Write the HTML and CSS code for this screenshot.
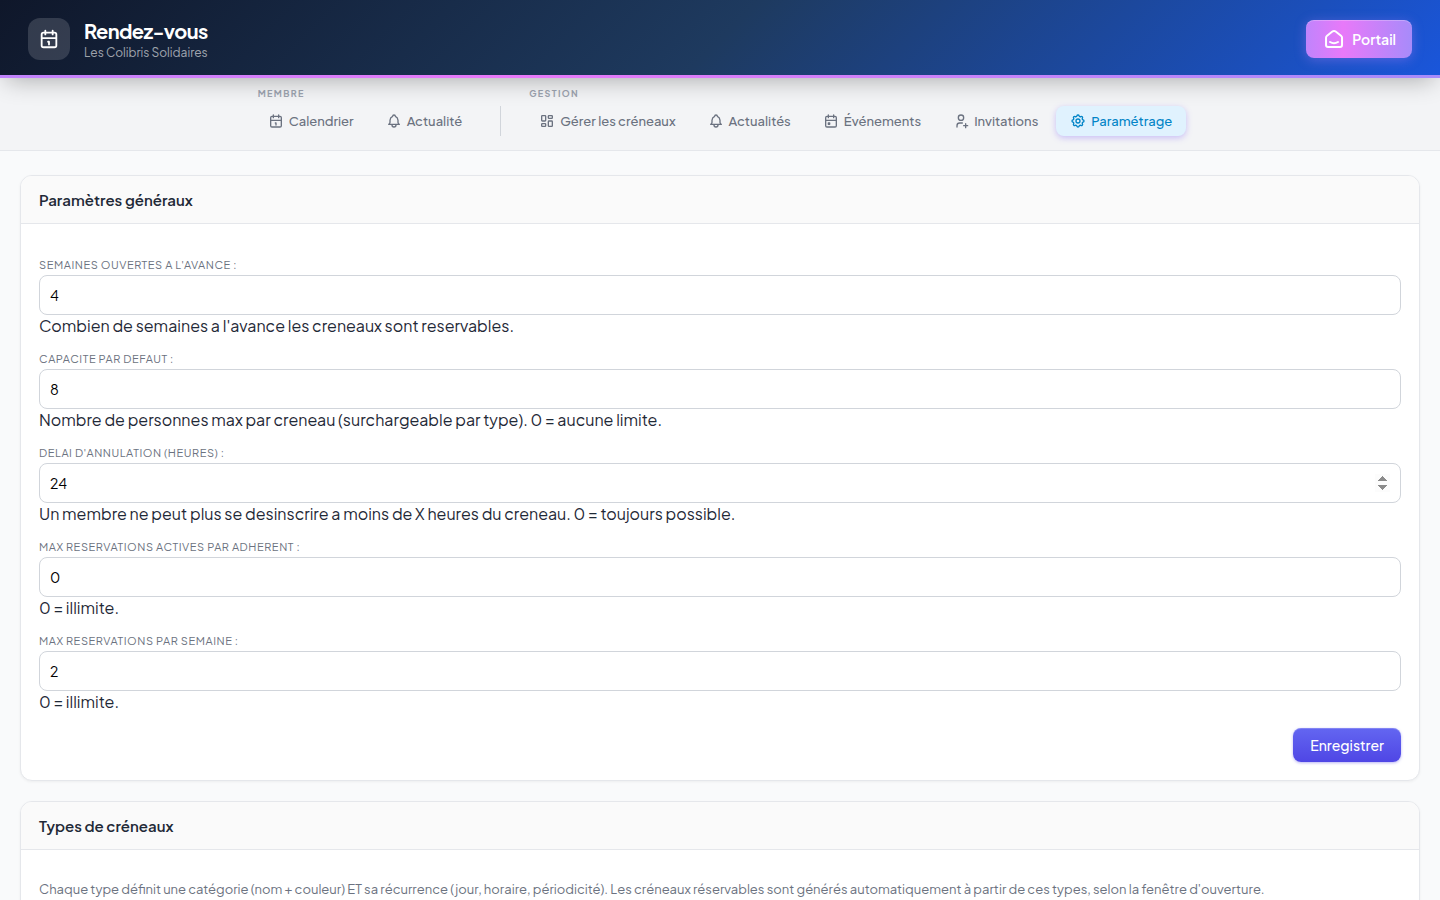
FILE: index.html
```html
<!DOCTYPE html>
<html lang="fr">
<head>
    <meta charset="UTF-8">
    <meta name="viewport" content="width=device-width, initial-scale=1.0">
    <title>Paramétrage - Rendez-vous</title>
    <link rel="stylesheet" href="styles.css">
</head>
<body>

<header class="topbar">
    <div class="brand">
        <span class="brand-icon">
            <svg class="icon icon-md" viewBox="0 0 24 24"><path d="M4 7a2 2 0 0 1 2-2h12a2 2 0 0 1 2 2v12a2 2 0 0 1-2 2H6a2 2 0 0 1-2-2zM16 3v4M8 3v4M4 11h16M11 15h1v3"/></svg>
        </span>
        <div>
            <h1 class="brand-title">Rendez-vous</h1>
            <p class="brand-subtitle">Les Colibris Solidaires</p>
        </div>
    </div>
    <a class="portal-link" href="#">
        <svg class="icon icon-lg" viewBox="0 0 24 24"><path d="M19 8.710l-5.333-4.148a2.666 2.666 0 0 0-3.274 0L5.059 8.710a2.665 2.665 0 0 0-1.029 2.105v7.200a2 2 0 0 0 2 2h12a2 2 0 0 0 2-2v-7.200c0-.823-.38-1.600-1.030-2.105M16 15c-2.210 1.333-5.792 1.333-8 0"/></svg>
        Portail
    </a>
</header>

<nav class="nav">
    <div class="nav-group">
        <span class="nav-label">Membre</span>
        <div class="nav-items">
            <a class="nav-link" href="#">
                <svg class="icon" viewBox="0 0 24 24"><path d="M4 7a2 2 0 0 1 2-2h12a2 2 0 0 1 2 2v12a2 2 0 0 1-2 2H6a2 2 0 0 1-2-2zM16 3v4M8 3v4M4 11h16M11 15h1v3"/></svg>
                Calendrier
            </a>
            <a class="nav-link" href="#">
                <svg class="icon" viewBox="0 0 24 24"><path d="M10 5a2 2 0 1 1 4 0a7 7 0 0 1 4 6v3a4 4 0 0 0 2 3H4a4 4 0 0 0 2-3v-3a7 7 0 0 1 4-6M9 17v1a3 3 0 0 0 6 0v-1"/></svg>
                Actualité
            </a>
        </div>
    </div>
    <div class="nav-separator"></div>
    <div class="nav-group">
        <span class="nav-label">Gestion</span>
        <div class="nav-items">
            <a class="nav-link" href="#">
                <svg class="icon" viewBox="0 0 24 24"><path d="M5 4h4a1 1 0 0 1 1 1v6a1 1 0 0 1-1 1H5a1 1 0 0 1-1-1V5a1 1 0 0 1 1-1M5 16h4a1 1 0 0 1 1 1v2a1 1 0 0 1-1 1H5a1 1 0 0 1-1-1v-2a1 1 0 0 1 1-1M15 12h4a1 1 0 0 1 1 1v6a1 1 0 0 1-1 1h-4a1 1 0 0 1-1-1v-6a1 1 0 0 1 1-1M15 4h4a1 1 0 0 1 1 1v2a1 1 0 0 1-1 1h-4a1 1 0 0 1-1-1V5a1 1 0 0 1 1-1"/></svg>
                Gérer les créneaux
            </a>
            <a class="nav-link" href="#">
                <svg class="icon" viewBox="0 0 24 24"><path d="M10 5a2 2 0 1 1 4 0a7 7 0 0 1 4 6v3a4 4 0 0 0 2 3H4a4 4 0 0 0 2-3v-3a7 7 0 0 1 4-6M9 17v1a3 3 0 0 0 6 0v-1"/></svg>
                Actualités
            </a>
            <a class="nav-link" href="#">
                <svg class="icon" viewBox="0 0 24 24"><path d="M4 7a2 2 0 0 1 2-2h12a2 2 0 0 1 2 2v12a2 2 0 0 1-2 2H6a2 2 0 0 1-2-2zM16 3v4M8 3v4M4 11h16M8 15h2v2H8z"/></svg>
                Événements
            </a>
            <a class="nav-link" href="#">
                <svg class="icon" viewBox="0 0 24 24"><path d="M8 7a4 4 0 1 0 8 0a4 4 0 0 0-8 0M16 19h6M19 16v6M6 21v-2a4 4 0 0 1 4-4h4"/></svg>
                Invitations
            </a>
            <a class="nav-link active" href="#">
                <svg class="icon" viewBox="0 0 24 24"><path d="M10.325 4.317c.426-1.756 2.924-1.756 3.350 0a1.724 1.724 0 0 0 2.573 1.066c1.543-.94 3.310.826 2.370 2.370a1.724 1.724 0 0 0 1.065 2.572c1.756.426 1.756 2.924 0 3.350a1.724 1.724 0 0 0-1.066 2.573c.94 1.543-.826 3.310-2.370 2.370a1.724 1.724 0 0 0-2.572 1.065c-.426 1.756-2.924 1.756-3.350 0a1.724 1.724 0 0 0-2.573-1.066c-1.543.94-3.310-.826-2.370-2.370a1.724 1.724 0 0 0-1.065-2.572c-1.756-.426-1.756-2.924 0-3.350a1.724 1.724 0 0 0 1.066-2.573c-.94-1.543.826-3.310 2.370-2.370c1 .608 2.296.07 2.572-1.065M9 12a3 3 0 1 0 6 0a3 3 0 0 0-6 0"/></svg>
                Paramétrage
            </a>
        </div>
    </div>
</nav>

<main class="content">
    <section class="card">
        <h2 class="card-header">Paramètres généraux</h2>
        <form class="card-body">
            <div class="field">
                <label for="weeks">Semaines ouvertes a l'avance :</label>
                <input type="number" id="weeks" value="4">
                <span class="help">Combien de semaines a l'avance les creneaux sont reservables.</span>
            </div>
            <div class="field">
                <label for="capacity">Capacite par defaut :</label>
                <input type="number" id="capacity" value="8">
                <span class="help">Nombre de personnes max par creneau (surchargeable par type). 0 = aucune limite.</span>
            </div>
            <div class="field">
                <label for="delay">Delai d'annulation (heures) :</label>
                <input type="number" id="delay" class="show-spinner" value="24">
                <span class="help">Un membre ne peut plus se desinscrire a moins de X heures du creneau. 0 = toujours possible.</span>
            </div>
            <div class="field">
                <label for="max-active">Max reservations actives par adherent :</label>
                <input type="number" id="max-active" value="0">
                <span class="help">0 = illimite.</span>
            </div>
            <div class="field">
                <label for="max-week">Max reservations par semaine :</label>
                <input type="number" id="max-week" value="2">
                <span class="help">0 = illimite.</span>
            </div>
            <div class="actions">
                <button type="submit" class="btn-primary">Enregistrer</button>
            </div>
        </form>
    </section>

    <section class="card">
        <h2 class="card-header">Types de créneaux</h2>
        <div class="card-body">
            <p class="intro">Chaque type définit une catégorie (nom + couleur) ET sa récurrence (jour, horaire, périodicité). Les créneaux réservables sont générés automatiquement à partir de ces types, selon la fenêtre d'ouverture.</p>
        </div>
    </section>
</main>

</body>
</html>
```
FILE: styles.css
```css
* {
    box-sizing: border-box;
}
html {
    scrollbar-width: none;
}
body {
    margin: 0;
    font-family: "Plus Jakarta Sans", Inter, sans-serif;
    font-size: 16px;
    color: #1f2937;
    background-color: #f9fafb;
}
a {
    text-decoration: none;
}
.icon {
    width: 16px;
    height: 16px;
    flex-shrink: 0;
    fill: none;
    stroke: currentColor;
    stroke-width: 2;
    stroke-linecap: round;
    stroke-linejoin: round;
}
.icon-md {
    width: 22px;
    height: 22px;
}
.icon-lg {
    width: 24px;
    height: 24px;
}

/* Header */
.topbar {
    position: relative;
    display: flex;
    align-items: center;
    justify-content: space-between;
    padding: 17px 28px;
    background: linear-gradient(135deg, #0f172a 0%, #1e3a5f 50%, #1a56db 100%);
    box-shadow: 0 8px 24px -6px rgba(0, 0, 0, 0.3);
    color: #fff;
}
.topbar::after {
    content: "";
    position: absolute;
    left: 0;
    right: 0;
    bottom: 0;
    height: 3px;
    background: linear-gradient(90deg, #c084fc, #e879f9 35%, #a78bfa);
}
.brand {
    display: flex;
    align-items: center;
    gap: 14px;
}
.brand-icon {
    display: flex;
    align-items: center;
    justify-content: center;
    width: 42px;
    height: 42px;
    border-radius: 12px;
    background-color: rgba(255, 255, 255, 0.15);
}
.brand-title {
    margin: 0;
    font-size: 20px;
    line-height: 28px;
    font-weight: 700;
    letter-spacing: -0.03em;
}
.brand-subtitle {
    margin: 0;
    font-size: 12px;
    line-height: 16px;
    color: rgba(255, 255, 255, 0.6);
}
.portal-link {
    display: flex;
    align-items: center;
    gap: 6px;
    height: 38px;
    padding: 0 16px;
    border-radius: 8px;
    background: linear-gradient(90deg, #c084fc, #e879f9 35%, #a78bfa);
    box-shadow: 0 2px 12px rgba(192, 132, 252, 0.35), inset 0 1px 0 rgba(255, 255, 255, 0.25);
    color: #fff;
    font-size: 14px;
    font-weight: 600;
}

/* Navigation */
.nav {
    display: flex;
    justify-content: center;
    align-items: flex-end;
    padding: 10px 20px 14px;
    border-bottom: 1px solid #e5e7eb;
    background-color: #f3f4f6;
}
.nav-label {
    display: block;
    padding-left: 4px;
    margin-bottom: 6px;
    font-size: 9px;
    line-height: 12px;
    font-weight: 700;
    letter-spacing: 0.15em;
    text-transform: uppercase;
    color: #9ca3af;
}
.nav-items {
    display: flex;
    gap: 4px;
}
.nav-link {
    display: flex;
    align-items: center;
    gap: 5px;
    height: 30px;
    padding: 0 14px;
    border-radius: 8px;
    font-size: 13px;
    font-weight: 500;
    color: #6b7280;
}
.nav-link.active {
    background-color: #e0f2fe;
    box-shadow: 0 2px 6px rgba(124, 92, 246, 0.35);
    color: #0284c7;
}
.nav-separator {
    width: 1px;
    height: 30px;
    margin: 0 24px;
    background-color: #d1d5db;
}

/* Cards */
.content {
    padding: 24px 20px;
}
.card {
    margin-bottom: 20px;
    border: 1px solid #e5e7eb;
    border-radius: 12px;
    overflow: hidden;
    background-color: #fff;
    box-shadow: 0 1px 3px rgba(0, 0, 0, 0.05);
}
.card-header {
    margin: 0;
    padding: 14px 18px;
    border-bottom: 1px solid #e5e7eb;
    background-color: #fafafa;
    font-size: 15px;
    line-height: 19px;
    font-weight: 600;
}
.card-body {
    padding: 18px;
}
.field {
    display: flex;
    flex-direction: column;
    margin: 16px 0;
}
.field + .field {
    margin-top: 0;
}
.field label {
    margin-bottom: 4px;
    font-size: 11px;
    line-height: 13px;
    letter-spacing: 0.05em;
    text-transform: uppercase;
    color: #6b7280;
}
.field input {
    height: 40px;
    padding: 0 10px;
    border: 1px solid #d1d5db;
    border-radius: 8px;
    font-family: inherit;
    font-size: 14px;
    background-color: #fff;
    color: #000;
}
.show-spinner::-webkit-inner-spin-button {
    opacity: 1;
}
.help {
    line-height: 21px;
}
.actions {
    display: flex;
    justify-content: flex-end;
}
.btn-primary {
    height: 34px;
    padding: 0 17px;
    border: none;
    border-radius: 8px;
    background: linear-gradient(180deg, #6366f1, #4f46e5);
    box-shadow: 0 1px 3px rgba(79, 70, 229, 0.4), inset 0 1px 0 rgba(255, 255, 255, 0.2);
    color: #fff;
    font-family: inherit;
    font-size: 14px;
    font-weight: 500;
    cursor: pointer;
}
.intro {
    margin: 13px 0;
    font-size: 13px;
    line-height: 17px;
    color: #6b7280;
}
```
